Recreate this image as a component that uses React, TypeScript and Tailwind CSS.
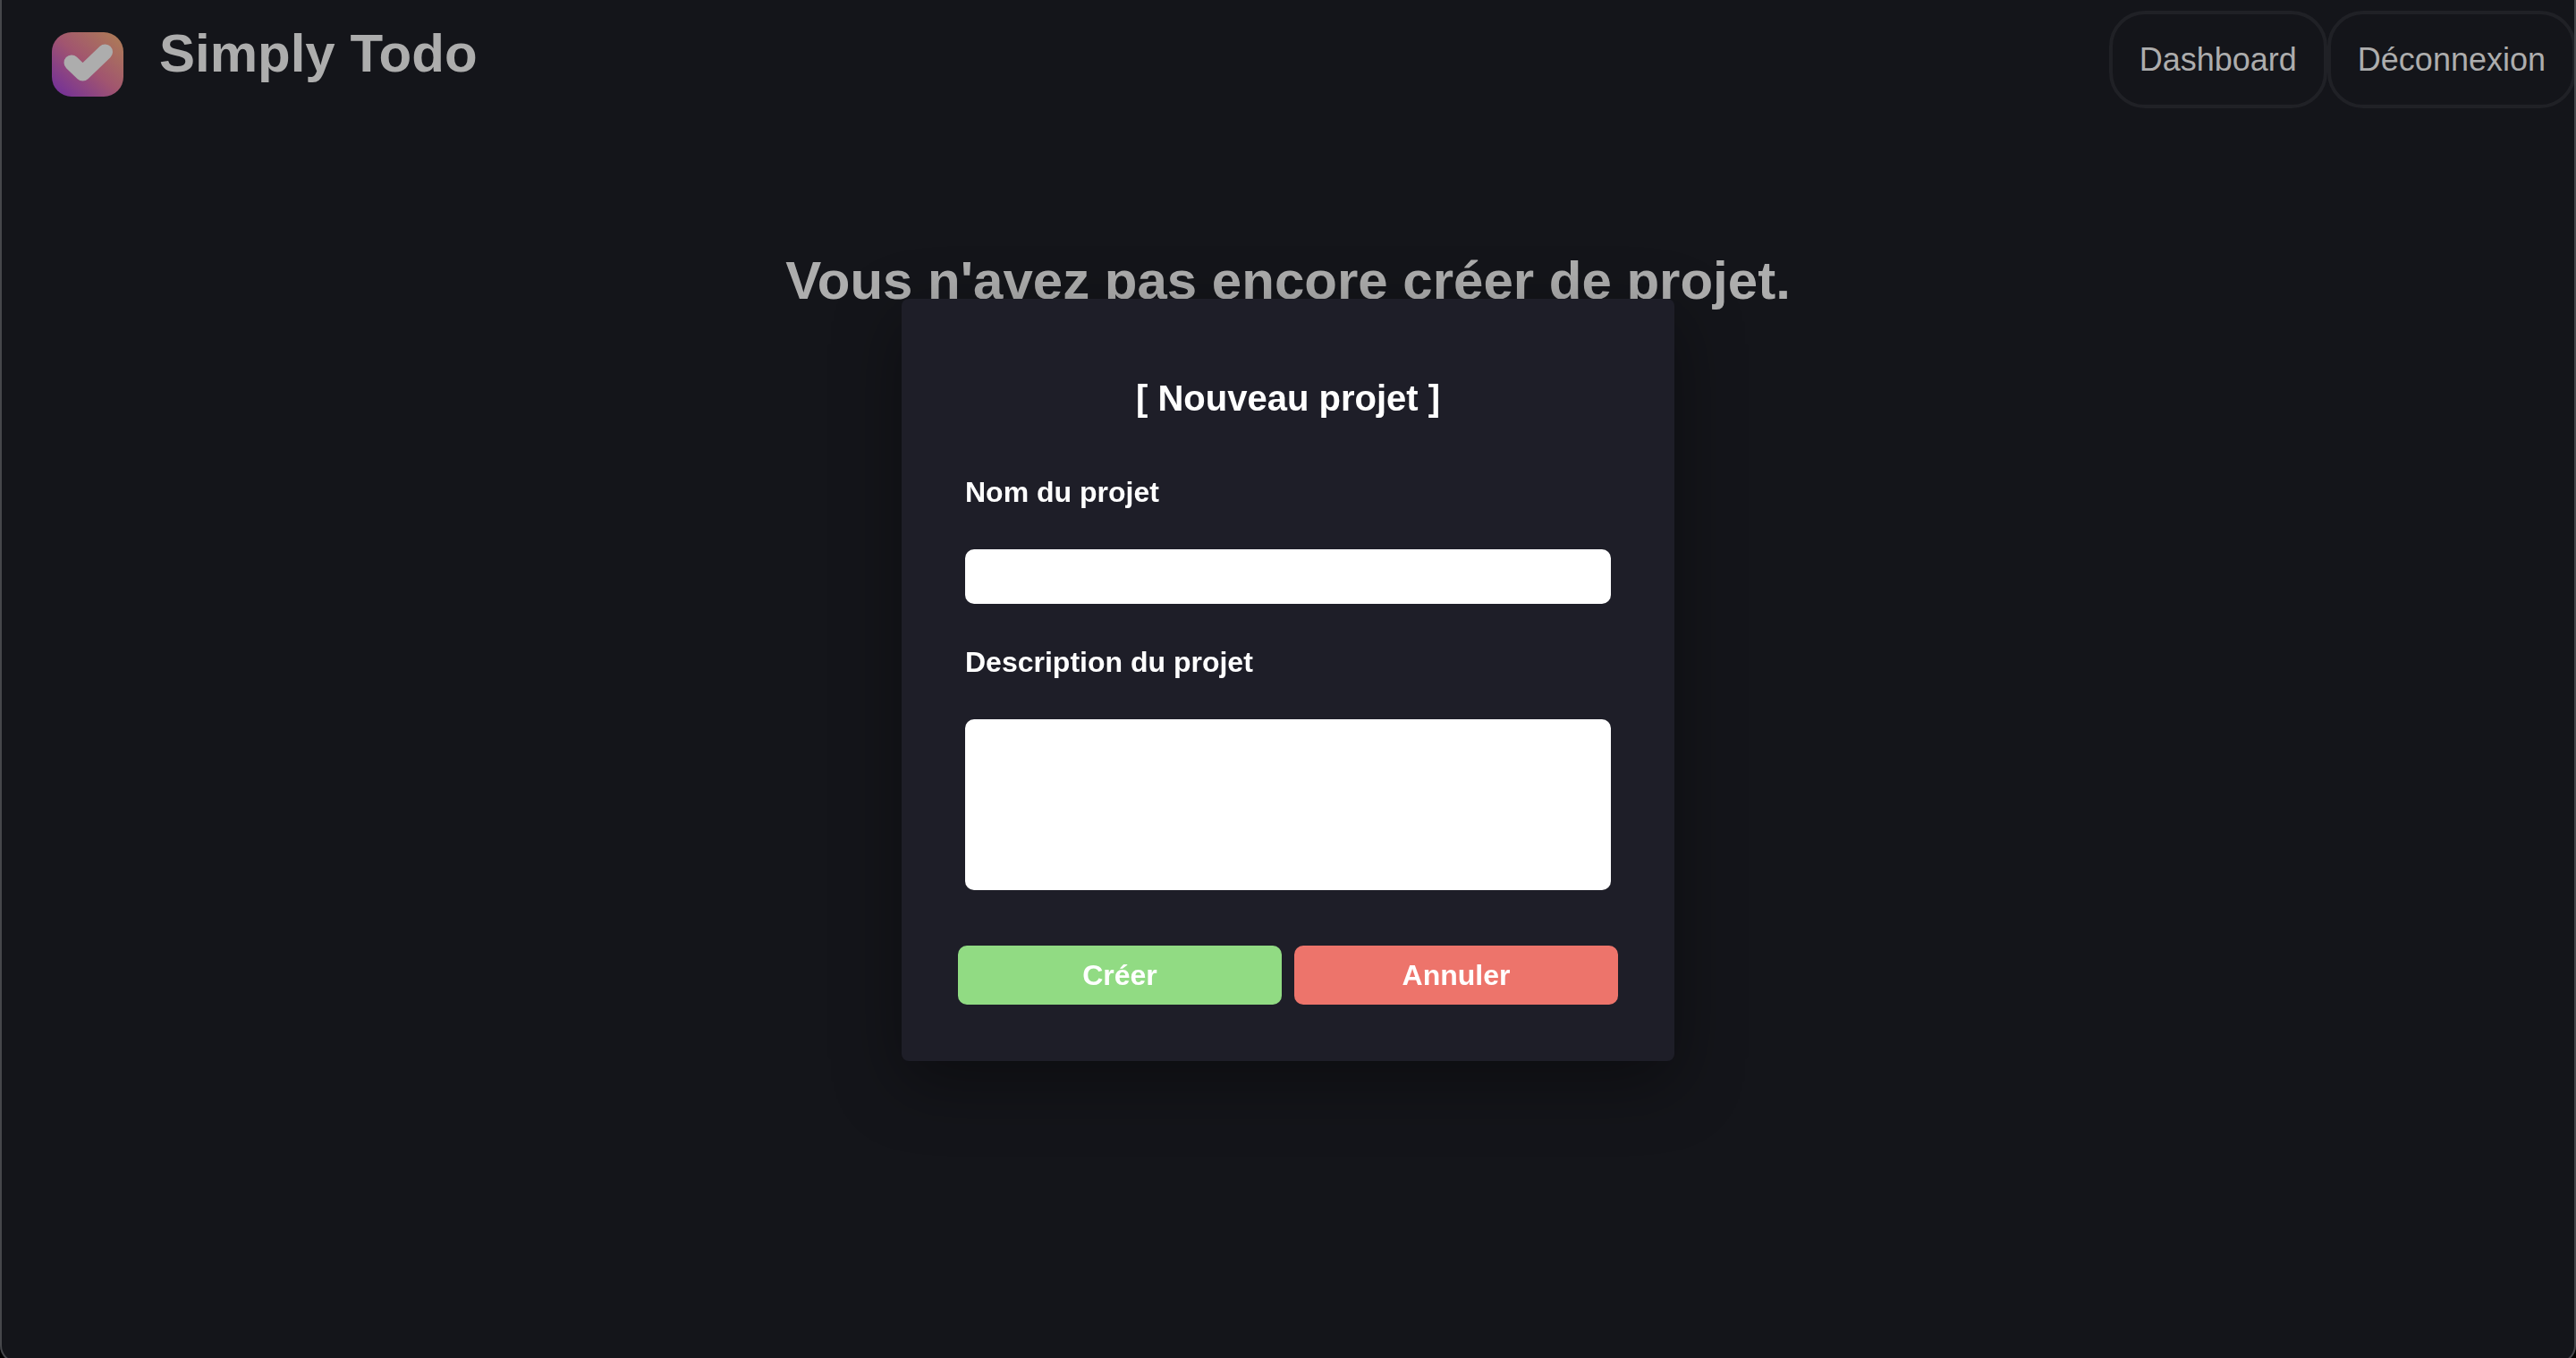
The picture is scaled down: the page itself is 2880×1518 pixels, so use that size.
import { useState } from "react";

function Logo() {
  return (
    <svg className="mt-9 h-[72px] w-20" viewBox="0 0 80 72" role="img" aria-label="Simply Todo">
      <defs>
        <linearGradient id="logo-fill" x1="0.05" y1="0.95" x2="0.95" y2="0.05">
          <stop offset="0" stopColor="#733099" />
          <stop offset="0.5" stopColor="#a1556f" />
          <stop offset="1" stopColor="#ad7b57" />
        </linearGradient>
      </defs>
      <rect width="80" height="72" rx="22" ry="22" fill="url(#logo-fill)" />
      <path
        d="M22 34 34.5 46 59.5 22"
        fill="none"
        stroke="#adadad"
        strokeWidth="17"
        strokeLinecap="round"
        strokeLinejoin="round"
      />
    </svg>
  );
}

function NavLink({ label }: { label: string }) {
  return (
    <a href="#" className="rounded-[40px] border-4 border-[#202126] p-[30px] text-4xl leading-[41px]">
      {label}
    </a>
  );
}

export default function App() {
  const [name, setName] = useState("");
  const [description, setDescription] = useState("");

  return (
    <div className="relative min-h-screen overflow-hidden bg-[#14151a] font-['Liberation_Sans',Arial,sans-serif] text-[#adadad]">
      <header className="flex items-start justify-between">
        <div className="flex items-start gap-10 pl-[58px]">
          <Logo />
          <p className="mt-6 text-6xl leading-[72px] font-bold">Simply Todo</p>
        </div>
        <nav className="flex pt-3">
          <NavLink label="Dashboard" />
          <NavLink label="Déconnexion" />
        </nav>
      </header>

      <main className="pt-[157px]">
        <h1 className="text-center text-6xl leading-[72px] font-bold">
          Vous n'avez pas encore créer de projet.
        </h1>
      </main>

      <div className="fixed inset-0 flex items-center justify-center pt-0.5">
        <form
          role="dialog"
          aria-labelledby="dialog-title"
          onSubmit={(event) => event.preventDefault()}
          className="w-[30%] rounded-lg bg-[#1e1e28] px-[63px] pt-[88px] pb-[63px] text-[32px] leading-9 font-bold text-white shadow-[0_24px_76px_rgba(0,0,0,0.38)]"
        >
          <h2 id="dialog-title" className="text-center text-[40px] leading-[46px]">
            [ Nouveau projet ]
          </h2>
          <div className="mt-16 flex flex-col px-2">
            <label htmlFor="project-name">Nom du projet</label>
            <input
              id="project-name"
              type="text"
              value={name}
              onChange={(event) => setName(event.target.value)}
              className="mt-[46px] h-[61px] rounded-[10px] bg-white px-4 font-normal text-black outline-none"
            />
            <label htmlFor="project-description" className="mt-[47px]">
              Description du projet
            </label>
            <textarea
              id="project-description"
              value={description}
              onChange={(event) => setDescription(event.target.value)}
              className="mt-[46px] h-[191px] resize-none rounded-[10px] bg-white px-4 py-2 font-normal text-black outline-none"
            />
          </div>
          <div className="mt-[62px] grid grid-cols-2 gap-[14px]">
            <button type="submit" className="h-[66px] rounded-[10px] bg-[#91db83]">
              Créer
            </button>
            <button type="button" className="h-[66px] rounded-[10px] bg-[#ed746b]">
              Annuler
            </button>
          </div>
        </form>
      </div>

      {/* Window edge with rounded lower corners */}
      <div className="pointer-events-none fixed inset-x-0 top-0 -bottom-1.5 rounded-b-[20px] border-x-2 border-b-2 border-[#46474b] shadow-[0_0_0_20px_#000000]" />
    </div>
  );
}
